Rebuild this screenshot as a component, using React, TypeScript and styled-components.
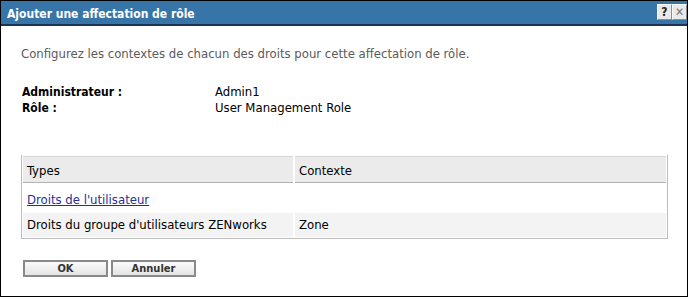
import React from "react";
import styled, { createGlobalStyle } from "styled-components";

const GlobalStyle = createGlobalStyle`
  html, body {
    margin: 0;
    padding: 0;
    background: #ffffff;
  }
  body {
    font-family: "DejaVu Sans Condensed", "DejaVu Sans", sans-serif;
    font-size: 13px;
    color: #000;
  }
`;

// Outer dialog frame
const Dialog = styled.div`
  width: 688px;
  height: 297px;
  box-sizing: border-box;
  border: 1px solid #000;
  display: flex;
  flex-direction: column;
  background: #fff;
`;

const TitleBar = styled.div`
  height: 23px;
  background: #3774a8;
  border-bottom: 2px solid #1c3450;
  display: flex;
  align-items: flex-start;
  justify-content: space-between;
  padding-left: 6px;
`;

const Title = styled.h1`
  margin: 5px 0 0 0;
  color: #fff;
  font-size: 12px;
  font-weight: bold;
  line-height: 16px;
`;

const TitleButtons = styled.div`
  display: flex;
  margin-top: 3px;
`;

const TitleButton = styled.span<{ $bold?: boolean }>`
  width: 15px;
  height: 16px;
  box-sizing: border-box;
  display: flex;
  align-items: center;
  justify-content: center;
  background: #e9e9e9;
  border: 1px solid;
  border-color: #fafafa #8c8c8c #8c8c8c #fafafa;
  color: ${(p) => (p.$bold ? "#222" : "#777")};
  font-weight: ${(p) => (p.$bold ? "bold" : "normal")};
  font-size: 12px;
  line-height: 1;
`;

const Body = styled.div`
  padding: 20px 20px 0 20px;
`;

const Intro = styled.p`
  margin: 0;
  color: #5a5a5a;
  line-height: 15px;
`;

const InfoGrid = styled.div`
  margin-top: 23px;
  display: grid;
  grid-template-columns: 194px 1fr;
  line-height: 16px;
`;

const Label = styled.div`
  font-weight: bold;
  font-size: 12px;
  padding-left: 1px;
`;

const Value = styled.div``;

// Table with header cells separated by small white gaps
const Table = styled.div`
  margin-top: 39px;
  width: 647px;
  box-sizing: border-box;
  border: 1px solid #bdbdbd;
  border-top: none;
  padding: 1px;
  display: grid;
  grid-template-columns: 270px 1fr;
  column-gap: 2px;
`;

const HeadCell = styled.div`
  background: #ebebeb;
  border-top: 1px solid #d6d6d6;
  border-bottom: 1px solid #b3b3b3;
  padding: 6px 4px 4px 4px;
  line-height: 15px;
`;

const Cell = styled.div<{ $alt?: boolean; $first?: boolean }>`
  background: ${(p) => (p.$alt ? "#f3f3f3" : "#fff")};
  padding: ${(p) => (p.$first ? "9px 4px 6px 4px" : "4px 4px 5px 4px")};
  line-height: 15px;
`;

const Link = styled.a`
  color: #1f2f9c;
  text-decoration: underline;
  cursor: pointer;
`;

const ButtonRow = styled.div`
  margin-top: 21px;
  margin-left: 2px;
  display: flex;
  gap: 3px;
`;

const Button = styled.button`
  width: 85px;
  height: 17px;
  box-sizing: border-box;
  border: 2px solid #8a8a8a;
  background: linear-gradient(#fbfbfb, #e4e4e4);
  font-family: "DejaVu Sans Condensed", "DejaVu Sans", sans-serif;
  font-size: 11px;
  font-weight: bold;
  color: #333;
  padding: 0;
  line-height: 12px;
`;

export default function App() {
  return (
    <>
      <GlobalStyle />
      <Dialog>
        <TitleBar>
          <Title>Ajouter une affectation de rôle</Title>
          <TitleButtons>
            <TitleButton $bold>?</TitleButton>
            <TitleButton>✕</TitleButton>
          </TitleButtons>
        </TitleBar>
        <Body>
          <Intro>
            Configurez les contextes de chacun des droits pour cette affectation de rôle.
          </Intro>
          <InfoGrid>
            <Label>Administrateur :</Label>
            <Value>Admin1</Value>
            <Label>Rôle :</Label>
            <Value>User Management Role</Value>
          </InfoGrid>
          <Table>
            <HeadCell>Types</HeadCell>
            <HeadCell>Contexte</HeadCell>
            <Cell $first>
              <Link>Droits de l'utilisateur</Link>
            </Cell>
            <Cell $first />
            <Cell $alt>Droits du groupe d'utilisateurs ZENworks</Cell>
            <Cell $alt>Zone</Cell>
          </Table>
          <ButtonRow>
            <Button>OK</Button>
            <Button>Annuler</Button>
          </ButtonRow>
        </Body>
      </Dialog>
    </>
  );
}
